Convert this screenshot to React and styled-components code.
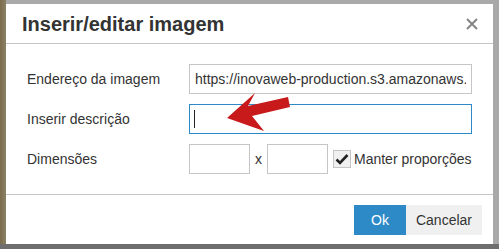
import React from 'react';
import styled, { createGlobalStyle } from 'styled-components';

const GlobalStyle = createGlobalStyle`
  html, body {
    margin: 0;
    padding: 0;
  }
  body {
    width: 499px;
    height: 249px;
    overflow: hidden;
    font-family: 'Liberation Sans', Arial, sans-serif;
    background: linear-gradient(to right, #7d6b4c 0, #8a8266 6px, #a9a9a9 6px, #a9a9a9 100%);
  }
`;

const Backdrop = styled.div`
  height: 249px;
  box-sizing: border-box;
  padding: 4px 6px 5px 6px;
  background: linear-gradient(to bottom, transparent 0, transparent 244px, #6e6e6e 244px);
`;

const Dialog = styled.div`
  position: relative;
  width: 487px;
  height: 240px;
  background: #fff;
  display: flex;
  flex-direction: column;
  box-sizing: border-box;
`;

const Header = styled.div`
  height: 40px;
  box-sizing: border-box;
  border-bottom: 1px solid #c5c5c5;
  display: flex;
  align-items: center;
  justify-content: space-between;
  padding: 0 14px 0 16px;
`;

const Title = styled.h1`
  margin: 0;
  font-size: 20px;
  font-weight: bold;
  color: #333;
  padding-top: 2px;
`;

const Close = styled.button`
  border: 0;
  background: none;
  padding: 0;
  width: 14px;
  height: 14px;
  display: flex;
  align-items: center;
  justify-content: center;
  cursor: pointer;
`;

const Body = styled.div`
  flex: 1;
  display: flex;
  flex-direction: column;
  gap: 10px;
  padding: 20px 21px 0 21px;
  border-bottom: 1px solid #c5c5c5;
`;

const Row = styled.div`
  display: flex;
  align-items: center;
  height: 30px;
`;

const Label = styled.label`
  width: 162px;
  flex-shrink: 0;
  font-size: 14px;
  color: #333;
`;

const Field = styled.div`
  position: relative;
  flex: ${p => (p.$grow ? 1 : 'none')};
  width: ${p => (p.$width ? `${p.$width}px` : 'auto')};
  height: 30px;
`;

const Input = styled.input`
  width: 100%;
  height: 100%;
  box-sizing: border-box;
  border: 1px solid ${p => (p.$focused ? '#2d8ac7' : '#c5c5c5')};
  padding: 0 5px;
  font-family: 'Liberation Sans', Arial, sans-serif;
  font-size: 14px;
  color: #333;
  outline: none;
  background: #fff;
`;

const Caret = styled.span`
  position: absolute;
  left: 5px;
  top: 6px;
  width: 1px;
  height: 18px;
  background: #222;
`;

const Times = styled.span`
  font-size: 14px;
  color: #333;
  margin: 0 5px 0 5px;
`;

const CheckWrap = styled.label`
  display: flex;
  align-items: center;
  gap: 3px;
  margin-left: 5px;
  font-size: 14px;
  color: #333;
  white-space: nowrap;
`;

const Box = styled.span`
  width: 16px;
  height: 16px;
  border: 1px solid #c5c5c5;
  background: #f0f0f0;
  display: flex;
  align-items: center;
  justify-content: center;
`;

const Footer = styled.div`
  height: 49px;
  box-sizing: border-box;
  display: flex;
  justify-content: flex-end;
  align-items: flex-start;
  padding: 10px 11px 0 0;
`;

const Button = styled.button`
  height: 30px;
  border: 0;
  padding: 0 ${p => (p.$primary ? 17 : 10)}px;
  font-family: 'Liberation Sans', Arial, sans-serif;
  font-size: 14px;
  background: ${p => (p.$primary ? '#2d8ac7' : '#f0f0f0')};
  color: ${p => (p.$primary ? '#fff' : '#333')};
  cursor: pointer;
`;

const Arrow = styled.svg`
  position: absolute;
  left: 210px;
  top: 85px;
  pointer-events: none;
`;

export default function App() {
  return (
    <>
      <GlobalStyle />
      <Backdrop>
        <Dialog>
          <Header>
            <Title>Inserir/editar imagem</Title>
            <Close aria-label="Fechar">
              <svg width="12" height="12" viewBox="0 0 12 12">
                <path d="M1 1 L11 11 M11 1 L1 11" stroke="#858585" strokeWidth="2" />
              </svg>
            </Close>
          </Header>
          <Body>
            <Row>
              <Label>Endereço da imagem</Label>
              <Field $grow>
                <Input readOnly value="https://inovaweb-production.s3.amazonaws.com/images/imagem.jpg" />
              </Field>
            </Row>
            <Row>
              <Label>Inserir descrição</Label>
              <Field $grow>
                <Input $focused readOnly value="" />
                <Caret />
              </Field>
            </Row>
            <Row>
              <Label>Dimensões</Label>
              <Field $width={61}>
                <Input readOnly value="" />
              </Field>
              <Times>x</Times>
              <Field $width={61}>
                <Input readOnly value="" />
              </Field>
              <CheckWrap>
                <Box>
                  <svg width="14" height="12" viewBox="0 0 14 12">
                    <path d="M1.5 6.5 L5 10 L12.5 2" stroke="#222" strokeWidth="2.6" fill="none" />
                  </svg>
                </Box>
                Manter proporções
              </CheckWrap>
            </Row>
          </Body>
          <Footer>
            <Button $primary>Ok</Button>
            <Button>Cancelar</Button>
          </Footer>
          <Arrow width="80" height="46" viewBox="0 0 80 46">
            <path
              d="M11 29 L39 4 L32 17 L72 8 L74 18 L36 27 L48 42 Z"
              fill="#c81a1a"
            />
          </Arrow>
        </Dialog>
      </Backdrop>
    </>
  );
}
